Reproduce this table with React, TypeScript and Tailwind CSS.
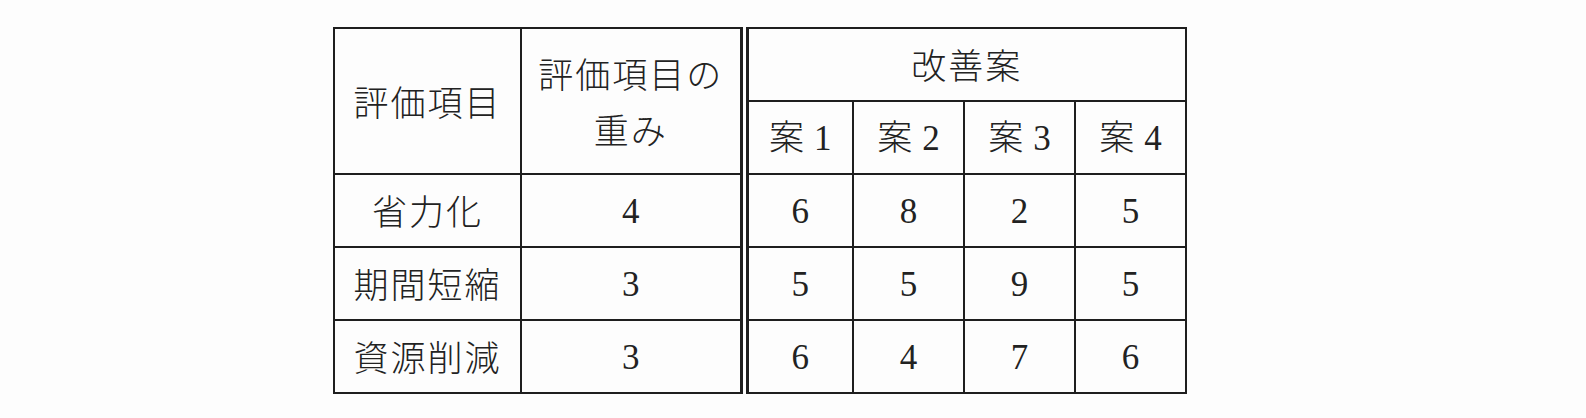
const jp = '"Noto Sans CJK JP", "Noto Sans", sans-serif';
const num = '"Liberation Serif", "Noto Sans CJK JP", serif';

const rows = [
  { item: '省力化', weight: 4, plans: [6, 8, 2, 5] },
  { item: '期間短縮', weight: 3, plans: [5, 5, 9, 5] },
  { item: '資源削減', weight: 3, plans: [6, 4, 7, 6] },
];

const cell = 'border-2 border-[#1e1e1e] text-center align-middle p-0';
const dbl = 'border-r-[9px] border-r-[#1e1e1e] border-double';

function Num({ n }: { n: number | string }) {
  return (
    <span className="text-[35px] tracking-normal" style={{ fontFamily: num }}>
      {n}
    </span>
  );
}

export default function App() {
  return (
    <div className="w-[1586px] h-[418px] bg-[#fdfdfd] pl-[333px] pt-[27px]">
      <table
        className="border-collapse table-fixed w-[852px] text-[#222] text-[35px] tracking-[2px] font-light"
        style={{ fontFamily: jp }}
      >
        <colgroup>
          <col className="w-[187px]" />
          <col className="w-[223px]" />
          <col className="w-[109px]" />
          <col className="w-[111px]" />
          <col className="w-[111px]" />
          <col className="w-[111px]" />
        </colgroup>
        <thead>
          <tr className="h-[73px]">
            <th rowSpan={2} className={`${cell} font-light`}>
              評価項目
            </th>
            <th rowSpan={2} className={`${cell} ${dbl} font-light leading-[56px]`}>
              評価項目の
              <br />
              重み
            </th>
            <th colSpan={4} className={`${cell} font-light`}>
              改善案
            </th>
          </tr>
          <tr className="h-[73px]">
            {[1, 2, 3, 4].map((n) => (
              <th key={n} className={`${cell} font-light`}>
                案<span className="ml-[8px]"><Num n={n} /></span>
              </th>
            ))}
          </tr>
        </thead>
        <tbody>
          {rows.map((r) => (
            <tr key={r.item} className="h-[73px]">
              <td className={cell}>{r.item}</td>
              <td className={`${cell} ${dbl}`}>
                <Num n={r.weight} />
              </td>
              {r.plans.map((p, i) => (
                <td key={i} className={cell}>
                  <Num n={p} />
                </td>
              ))}
            </tr>
          ))}
        </tbody>
      </table>
    </div>
  );
}
